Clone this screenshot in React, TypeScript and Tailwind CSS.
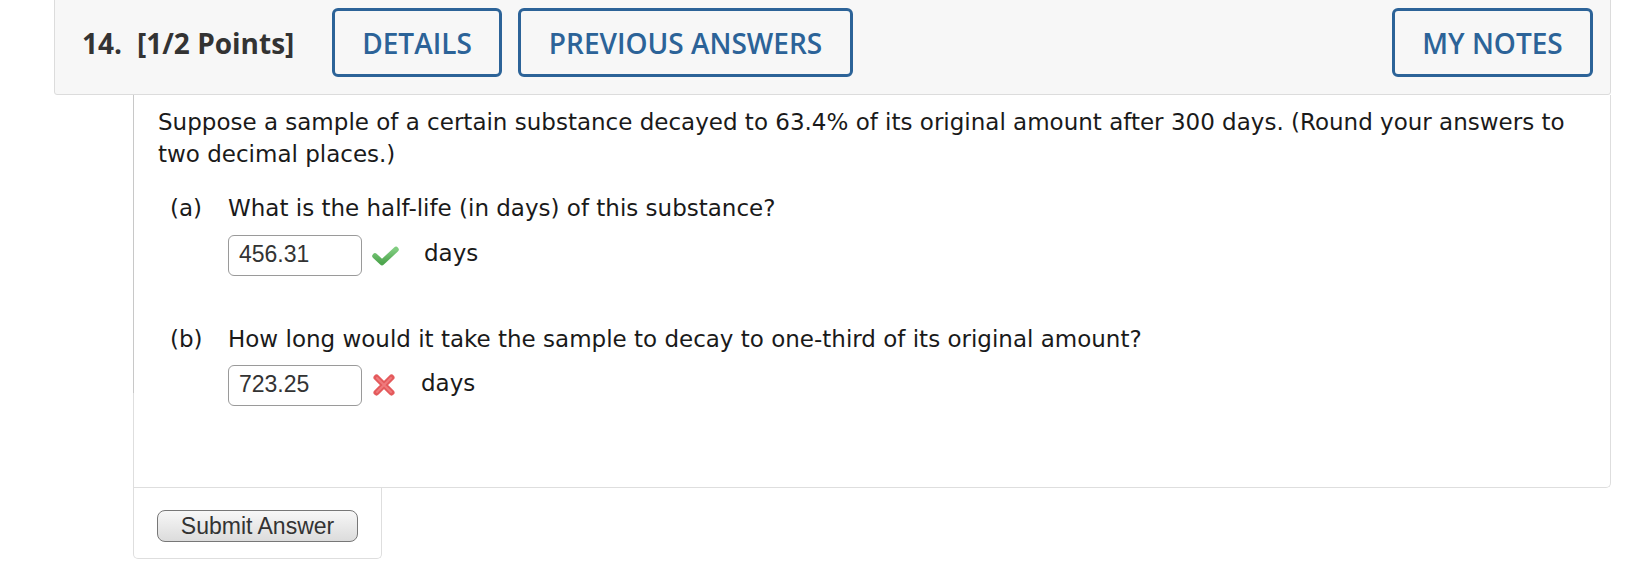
import React from "react";

function Check() {
  return (
    <svg width="27" height="21" viewBox="0 0 27 21" className="block">
      <defs>
        <linearGradient id="g" x1="0" y1="0" x2="0" y2="1">
          <stop offset="0" stopColor="#80cc80" />
          <stop offset="1" stopColor="#4ea64e" />
        </linearGradient>
      </defs>
      <path d="M3 10 L10 16.5 L24 3.5" fill="none" stroke="url(#g)" strokeWidth="5.5" strokeLinecap="round" strokeLinejoin="round" />
    </svg>
  );
}

function Cross() {
  return (
    <svg width="24" height="24" viewBox="0 0 24 24" className="block">
      <path d="M4.5 4.5 L19.5 19.5 M19.5 4.5 L4.5 19.5" fill="none" stroke="#e45a5c" strokeWidth="6" strokeLinecap="round" />
      <path d="M5 5 L19 19 M19 5 L5 19" fill="none" stroke="#ef7a7c" strokeWidth="2" strokeLinecap="round" />
    </svg>
  );
}

function HeaderButton({ label, w }: { label: string; w: string }) {
  return (
    <div
      className={`${w} h-[69px] flex items-center justify-center border-[3px] border-[#2c6398] rounded-[6px] text-[#2c6398] text-[28px] font-semibold`}
      style={{ fontFamily: '"Open Sans", sans-serif' }}
    >
      {label}
    </div>
  );
}

function Answer({ value, ok }: { value: string; ok: boolean }) {
  return (
    <div className="flex items-center h-[41px]">
      <div
        className="w-[134px] h-[41px] border border-[#9a9a9a] rounded-[6px] flex items-center pl-[10px] pb-[3px] text-[23px] text-[#333]"
        style={{ fontFamily: '"Liberation Sans", Arial, sans-serif' }}
      >
        {value}
      </div>
      {ok ? (
        <div className="ml-[10px] mt-[2px]">
          <Check />
        </div>
      ) : (
        <div className="ml-[10px] -mt-[1px]">
          <Cross />
        </div>
      )}
      <span className="ml-[25px] -mt-[6px]">days</span>
    </div>
  );
}

export default function App() {
  return (
    <div className="w-[1640px] h-[580px] bg-white overflow-hidden">
      {/* header */}
      <div className="ml-[54px] w-[1557px] -mt-[4px] h-[99px] bg-[#f7f7f7] border border-[#dcdcdc] rounded-b-[3px] flex items-start pt-[11px] pl-[27px] pr-[17px]">
        <div
          className="flex items-center h-[69px] text-[#333] text-[28px] font-bold"
          style={{ fontFamily: '"Open Sans", sans-serif' }}
        >
          <span className="w-[55px]">14.</span>
          <span className="w-[195px]">[1/2 Points]</span>
        </div>
        <div className="flex gap-[16px]">
          <HeaderButton label="DETAILS" w="w-[170px]" />
          <HeaderButton label="PREVIOUS ANSWERS" w="w-[335px]" />
        </div>
        <div className="ml-auto">
          <HeaderButton label="MY NOTES" w="w-[201px]" />
        </div>
      </div>

      {/* content */}
      <div
        className="relative ml-[133px] w-[1478px] h-[393px] border-x border-b border-[#dedede] rounded-br-[5px] pt-[11px] pl-[24px] pr-[14px] text-[23px] leading-[32px] text-[#1a1a1a]"
        style={{ fontFamily: '"DejaVu Sans", Verdana, sans-serif' }}
      >
        <div className="absolute left-[-1px] top-0 w-px h-[298px] bg-[#c8c8c8]" />
        <p>
          Suppose a sample of a certain substance decayed to 63.4% of its original amount after 300 days. (Round your answers to two decimal places.)
        </p>
        <div className="mt-[22px] flex">
          <span className="w-[70px] pl-[12px]">(a)</span>
          <div>
            <div>What is the half-life (in days) of this substance?</div>
            <div className="mt-[11px]">
              <Answer value="456.31" ok={true} />
            </div>
          </div>
        </div>
        <div className="mt-[47px] flex">
          <span className="w-[70px] pl-[12px]">(b)</span>
          <div>
            <div>How long would it take the sample to decay to one-third of its original amount?</div>
            <div className="mt-[10px]">
              <Answer value="723.25" ok={false} />
            </div>
          </div>
        </div>
      </div>

      {/* submit */}
      <div className="ml-[133px] w-[249px] h-[71px] border-x border-b border-[#dedede] rounded-b-[5px] pt-[22px] pl-[23px]">
        <button
          className="w-[201px] h-[32px] rounded-[8px] border border-[#777] bg-gradient-to-b from-[#f7f7f7] to-[#dcdcdc] text-[23px] text-[#333] flex items-center justify-center leading-none"
          style={{ fontFamily: '"Liberation Sans", Arial, sans-serif' }}
        >
          Submit Answer
        </button>
      </div>
    </div>
  );
}
